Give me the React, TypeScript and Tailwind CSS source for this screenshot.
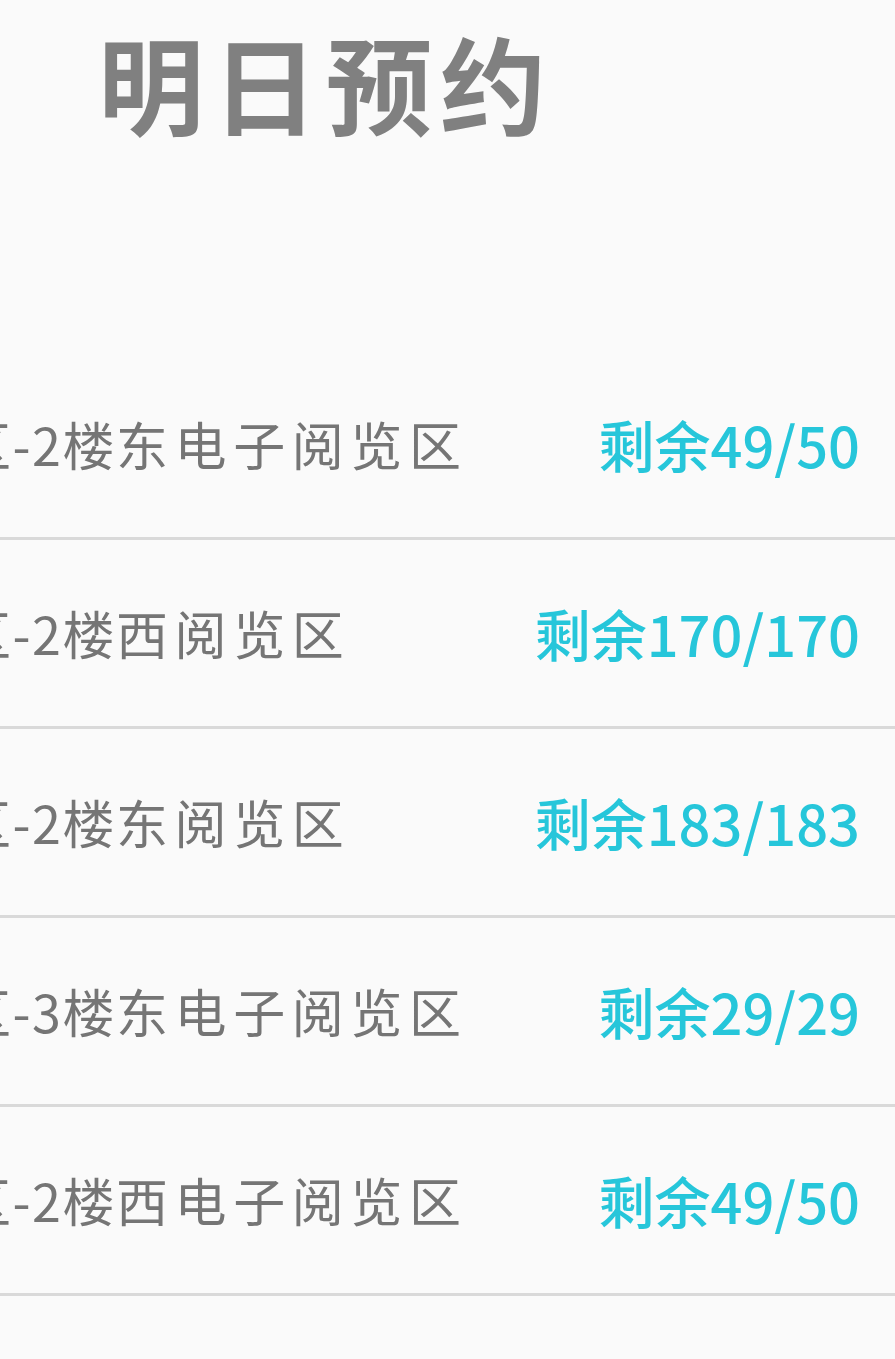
const rows = [
  { name: '东电子阅览区', floor: 2, left: 49, total: 50 },
  { name: '西阅览区', floor: 2, left: 170, total: 170 },
  { name: '东阅览区', floor: 2, left: 183, total: 183 },
  { name: '东电子阅览区', floor: 3, left: 29, total: 29 },
  { name: '西电子阅览区', floor: 2, left: 49, total: 50 },
];

const font = { fontFamily: '"Noto Sans CJK SC", "Noto Sans", sans-serif' };

export default function App() {
  return (
    <div className="w-[895px] h-[1359px] overflow-hidden bg-[#fafafa]" style={font}>
      <div className="h-[351px] pl-[98px] pt-[28px]">
        <h1 className="text-[106px] leading-none font-bold tracking-[8px] text-[#808080]">明日预约</h1>
      </div>
      <ul>
        {rows.map((r, i) => (
          <li
            key={i}
            className="flex h-[189px] items-center justify-between overflow-hidden border-b-[3px] border-[#d9d9d9] pr-[35px]"
          >
            <span className="-ml-[41px] whitespace-nowrap text-[52px] leading-none text-[#757575]">
              <span className="tracking-[1.5px]">区-{r.floor}楼</span>
              <span className="tracking-[6.6px]">{r.name}</span>
            </span>
            <span className="whitespace-nowrap text-[56px] leading-none font-medium text-[#26c6da]">
              剩余{r.left}/{r.total}
            </span>
          </li>
        ))}
      </ul>
    </div>
  );
}
